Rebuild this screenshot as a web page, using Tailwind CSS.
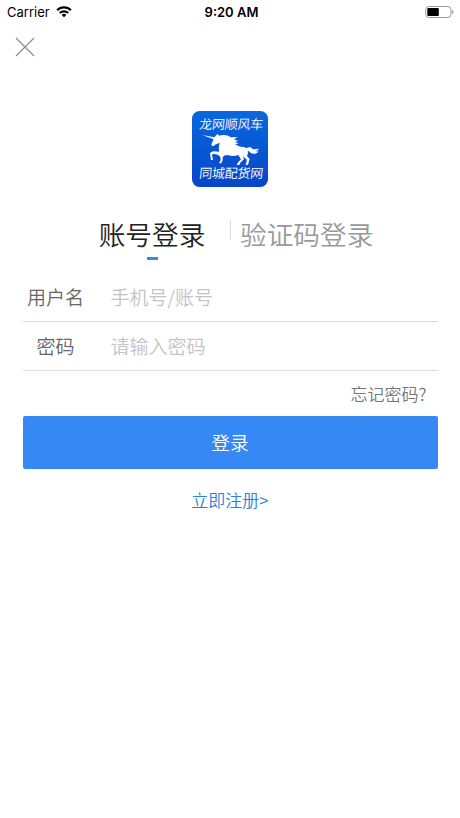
<!DOCTYPE html>
<html lang="zh-CN">
<head>
  <meta charset="UTF-8">
  <meta name="viewport" content="width=device-width, initial-scale=1.0">
  <title>登录</title>
  <script src="https://cdn.jsdelivr.net/npm/@tailwindcss/browser@4"></script>
</head>
<body class="bg-white font-['Noto_Sans_CJK_SC',sans-serif] font-[350]">
  <div class="h-[818px] w-[460px] overflow-hidden">
    <!-- Status bar -->
    <header class="grid h-6 grid-cols-3 items-center pl-[7px] pr-[6px] font-['Inter',sans-serif] text-black">
      <div class="flex items-center gap-[6px]">
        <span class="text-[13px] font-normal leading-none">Carrier</span>
        <svg class="h-3 w-4" viewBox="0 0 16 12" fill="none" stroke="#000" stroke-width="2.3">
          <path d="M1.2 4.2a9.6 9.6 0 0 1 13.6 0" />
          <path d="M3.8 7a6 6 0 0 1 8.4 0" />
          <path d="M8 11.2 5.7 8.9a3.3 3.3 0 0 1 4.6 0z" fill="#000" stroke="none" />
        </svg>
      </div>
      <span class="pl-[2px] text-center text-[13px] font-semibold leading-none">9:20 AM</span>
      <svg class="h-3 w-[29px] justify-self-end" viewBox="0 0 29 12">
        <rect x="0.7" y="0.5" width="25.3" height="11" rx="3" fill="none" stroke="#999" />
        <rect x="2.3" y="2" width="11.5" height="8" rx="1" fill="#000" />
        <path d="M27.3 4v4c1.6-.6 1.6-3.4 0-4z" fill="#888" />
      </svg>
    </header>

    <button class="mt-[13px] ml-[15px] block" aria-label="关闭">
      <svg class="size-5" viewBox="0 0 20 20" stroke="#8a8a8a" stroke-width="1.1">
        <path d="M1 1l18 18M19 1L1 19" />
      </svg>
    </button>

    <!-- Logo -->
    <svg class="mx-auto mt-[54px] block size-[76px]" viewBox="21 18 228 228">
      <defs>
        <linearGradient id="tile" x1="0" y1="0" x2="0" y2="1">
          <stop offset="0" stop-color="#0968dd" />
          <stop offset="1" stop-color="#0646c9" />
        </linearGradient>
      </defs>
      <rect x="21" y="18" width="228" height="228" rx="23" fill="url(#tile)" />
      <g fill="#fff" font-size="39" font-weight="350">
        <text x="42" y="72" textLength="192" transform="skewX(-6) translate(7 0)">龙网顺风车</text>
        <text x="42" y="218" textLength="192" transform="skewX(-6) translate(22 0)">同城配货网</text>
      </g>
      <path fill="#fff" d="M52 90L88 97L97 87L103 92C115 88 130 91 137 97L158 97L147 103L160 108L150 110L161 116L150 117L160 123C170 127 178 124 184 130C190 125 199 126 203 132C209 135 215 131 222 131C218 136 216 137 211 138C215 140 219 140 221 138C216 147 206 148 199 145C194 143 192 138 188 136C190 143 188 149 186 153L194 162L189 179L182 180L186 164L173 154L177 163L167 172L163 180L155 180L160 171L168 163L160 150C148 154 132 153 121 150L113 157L113 166L109 175L102 175L107 166L106 156L100 150L86 146L81 149L84 165L78 165L75 144L84 139L103 140C100 130 102 122 104 113L90 119L85 124L79 121L81 113L86 103Z" />
    </svg>

    <!-- Login type tabs -->
    <nav class="mt-7 flex items-start pl-[98px] text-[26.7px] leading-[38px]">
      <div class="flex w-[108px] flex-col items-center whitespace-nowrap text-[#222]">
        <span>账号登录</span>
        <i class="mt-1 block h-[3px] w-[11px] bg-[#3388e8]"></i>
      </div>
      <i class="mt-[5px] ml-[24px] block h-5 w-px bg-[#ddd]"></i>
      <span class="ml-[9px] whitespace-nowrap text-[#999]">验证码登录</span>
    </nav>

    <form class="mr-[22.5px] ml-[22.5px] mt-[13px]">
      <label class="flex h-[49px] items-center border-b border-[#ddd] text-[19px]">
        <span class="w-[66px] text-center text-[#666]">用户名</span>
        <input type="text" placeholder="手机号/账号" class="ml-[22px] w-80 placeholder:text-[#c3c3c8]">
      </label>
      <label class="flex h-[49px] items-center border-b border-[#ddd] text-[19px]">
        <span class="w-[66px] text-center text-[#666]">密码</span>
        <input type="password" placeholder="请输入密码" class="ml-[22px] w-80 placeholder:text-[#c3c3c8]">
      </label>
      <a class="mt-[10px] mr-[11px] block text-right text-[17px] leading-[25px] text-[#777]">忘记密码?</a>
      <button type="button" class="mt-[10px] block h-[53px] w-full rounded-[2px] bg-[#3689f5] text-[18.7px] text-white">登录</button>
      <a class="mt-[18px] block text-center text-[17px] leading-[25px] text-[#2d7fdc]">立即注册&gt;</a>
    </form>
  </div>
</body>
</html>
